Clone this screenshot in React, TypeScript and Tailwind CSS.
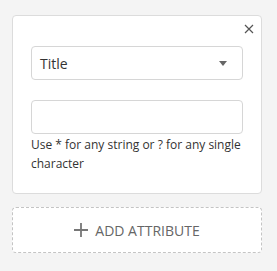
import React from "react";

const App: React.FC = () => {
  return (
    <div
      className="w-[277px] h-[271px] bg-[#f4f4f4] pl-3 pr-[15px] pt-[15px]"
      style={{ fontFamily: '"Open Sans", sans-serif' }}
    >
      {/* Attribute filter card */}
      <div className="relative h-[179px] rounded border border-[#dcdcdc] bg-white px-[18px] pt-[30px]">
        <button className="absolute right-[5px] top-[6px] flex h-[14px] w-[14px] items-center justify-center text-[#555]">
          <svg width="10" height="10" viewBox="0 0 10 10" fill="none">
            <path d="M1 1L9 9M9 1L1 9" stroke="currentColor" strokeWidth="1.2" />
          </svg>
        </button>

        <div className="flex h-[34px] items-center justify-between rounded border border-[#d6d6d6] bg-white pl-[8px] pr-[15px]">
          <span className="text-[14px] text-[#333]">Title</span>
          <svg width="8" height="5" viewBox="0 0 8 5">
            <path d="M0 0H8L4 5Z" fill="#666" />
          </svg>
        </div>

        <div className="mt-[20px] h-[34px] rounded border border-[#d6d6d6] bg-white" />
        <p className="mt-[1px] text-[12px] leading-[19px] text-[#333]">
          Use * for any string or ? for any single character
        </p>
      </div>

      {/* Add attribute button */}
      <button className="mt-[13px] flex h-[46px] w-full items-center justify-center gap-[7px] rounded border border-dashed border-[#c4c4c4] bg-white text-[14px] text-[#666]">
        <svg width="14" height="14" viewBox="0 0 14 14">
          <path d="M7 0V14M0 7H14" stroke="#777" strokeWidth="1.8" />
        </svg>
        <span>ADD ATTRIBUTE</span>
      </button>
    </div>
  );
};

export default App;
